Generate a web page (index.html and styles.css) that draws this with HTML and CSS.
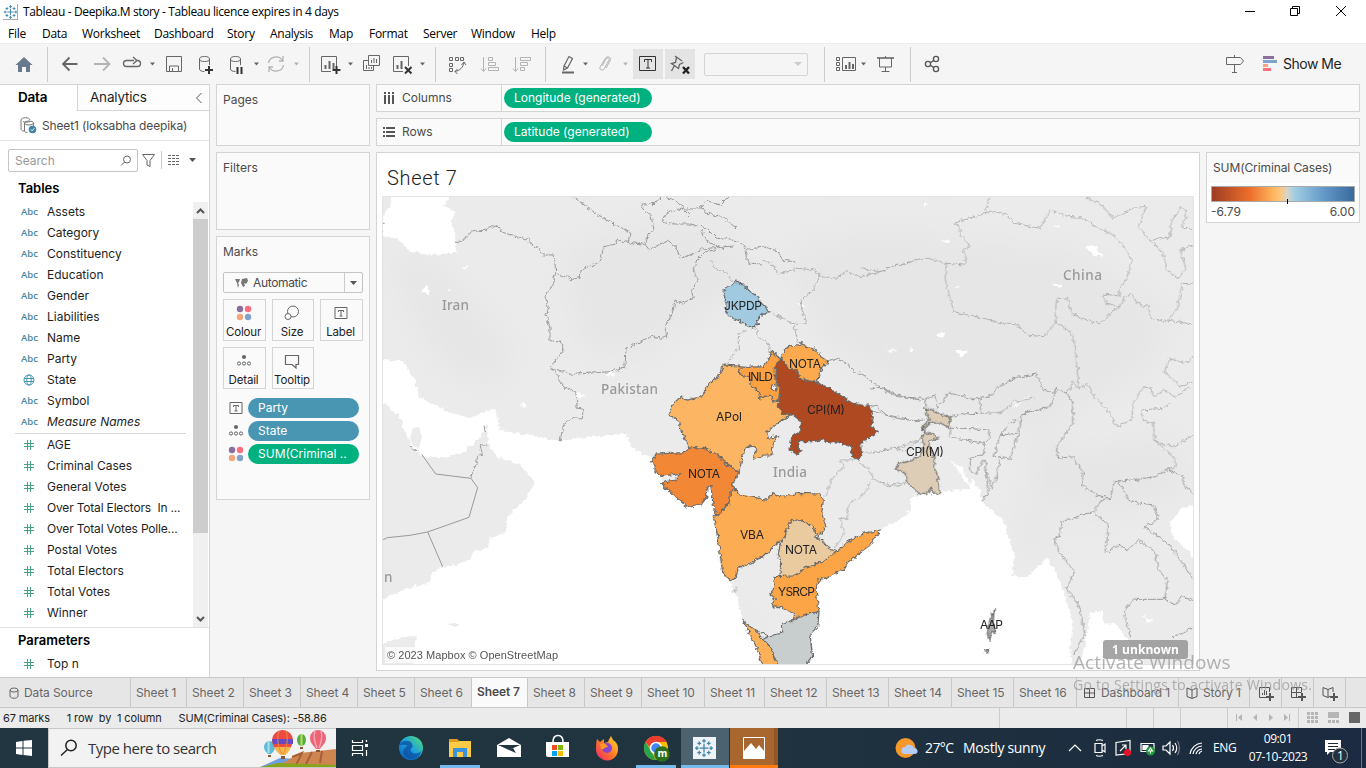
FILE: index.html
```html
<!DOCTYPE html>
<html lang="en">
<head>
<meta charset="utf-8">
<title>Tableau - Deepika.M story</title>
<link rel="stylesheet" href="styles.css">
</head>
<body>
<svg class="defs" width="0" height="0">
  <defs>
    <symbol id="tableau" viewBox="0 0 16 16"><path d="M8 4.500v7M4.500 8h7M8 .8v3M6.500 2.300h3M8 12.200v3M6.500 13.700h3M2.300 6.500v3M.8 8h3M13.700 6.500v3M12.200 8h3M4.200 2.800v3M2.700 4.300h3M11.800 2.800v3M10.300 4.300h3M4.200 10.200v3M2.700 11.700h3M11.800 10.200v3M10.300 11.700h3" stroke="#3d83ab" fill="none"/></symbol>
    <symbol id="hash" viewBox="0 0 12 12"><path d="M4.500 1v10M7.500 1v10M1 4.500h10M1 7.500h10" stroke="#44a480" fill="none"/></symbol>
    <symbol id="dots" viewBox="0 0 16 16"><circle cx="4" cy="4" r="3.200" fill="#8a6f9c"/><circle cx="12" cy="4" r="3.200" fill="#fb6e7f"/><circle cx="4" cy="12" r="3.200" fill="#f4a57c"/><circle cx="12" cy="12" r="3.200" fill="#80a3cd"/></symbol>
    <symbol id="detail" viewBox="0 0 16 16"><circle cx="8" cy="4" r="2.100" fill="#666"/><g fill="none" stroke="#666"><circle cx="3" cy="10.500" r="1.600"/><circle cx="8" cy="10.500" r="1.600"/><circle cx="13" cy="10.500" r="1.600"/></g></symbol>
    <symbol id="tbox" viewBox="0 0 16 16"><path d="M2 2.500h12v11H2zM5.500 7V5.500h5V7M8 5.500v5.500M6.500 11h3" fill="none" stroke="#666"/></symbol>
  </defs>
</svg>

<header class="titlebar">
  <svg class="app-icon" width="15" height="16"><use href="#tableau" width="15" height="16"/></svg>
  <span>Tableau - Deepika.M story - Tableau licence expires in 4 days</span>
  <svg class="winbtns" width="116" height="22" fill="none" stroke="#000"><path d="M0 10.500h10M45.500 7.500h7v7h-7zM47.500 7V5.500h7v7H53M91 5l10 10M101 5L91 15"/></svg>
</header>
<nav class="menu"><span>File</span><span>Data</span><span>Worksheet</span><span>Dashboard</span><span>Story</span><span>Analysis</span><span>Map</span><span>Format</span><span>Server</span><span>Window</span><span>Help</span></nav>

<div class="toolbar">
  <svg class="grp" width="47" height="41" viewBox="0 43 47 41"><path d="M24 57l8.500 8H30v7h-4v-5h-4v5h-4v-7h-2.500z" fill="#69788c"/></svg>
  <i class="sep"></i>
  <svg class="grp" width="261" height="41" viewBox="48 43 261 41" fill="none" stroke="#666">
    <path d="M77.500 64H63.500M69.500 57.500L63 64l6.500 6.500" stroke-width="1.800"/>
    <path d="M94 64h14.500M103 57.500l6.500 6.500-6.500 6.500" stroke="#b3b3b3" stroke-width="1.800"/>
    <path d="M134 60.500h-7.500a3 3 0 0 0 0 6h11a3 3 0 0 0 0-6h-2M133 57l4 3.500-4 3.500" stroke-width="1.300"/>
    <path d="M150 62.500h5l-2.500 3z" fill="#666" stroke="none"/>
    <path d="M166.500 56.500h15v15h-15zM169.500 71v-5h9v5M172.500 68v3.500"/>
    <g id="db"><ellipse cx="204.500" cy="59" rx="5" ry="2.500"/><path d="M199.500 59v10c0 1.500 2 2.500 5 2.500M209.500 59v6"/></g>
    <path d="M209 66v8M205 70h8" stroke="#333" stroke-width="2"/>
    <use href="#db" x="31"/><path d="M237.500 67v7M241.500 67v7" stroke="#333" stroke-width="2"/>
    <path d="M254 62.500h5l-2.500 3z" fill="#666" stroke="none"/>
    <path d="M268.500 63a7.500 7 0 0 1 14-2.500M283.500 65a7.500 7 0 0 1-14 2.500M283 56v5h-4M269 72v-5h4" stroke="#b3b3b3" stroke-width="1.300"/>
    <path d="M294 62.500h5l-2.500 3z" fill="#b3b3b3" stroke="none"/>
  </svg>
  <i class="sep"></i>
  <svg class="grp" width="125" height="41" viewBox="310 43 125 41" fill="none" stroke="#666">
    <path d="M331 71.500h-9.500v-15h15V67"/><path d="M325.500 69v-4M329.500 69v-8M333.500 69v-6" stroke-width="2"/><path d="M336.500 66v8M332.500 70h8" stroke="#333" stroke-width="2"/>
    <path d="M348 62.500h5l-2.500 3z" fill="#666" stroke="none"/>
    <path d="M368.500 55.500h11v10h-11zM368 60.500h-4.500v10h10V66M371.500 63v-3M374 63v-5M376.500 63v-4M366.500 69v-4M369 69v-2M371.500 69v-2"/>
    <path d="M403 71.500h-9.500v-15h15V66"/><path d="M397.500 69v-4M401.500 69v-8" stroke-width="2"/><path d="M405 67l6.500 6.500M411.500 67L405 73.500" stroke="#333" stroke-width="2"/>
    <path d="M420 62.500h5l-2.500 3z" fill="#666" stroke="none"/>
  </svg>
  <i class="sep"></i>
  <svg class="grp" width="109" height="41" viewBox="436 43 109 41" fill="none" stroke="#666">
    <path d="M449.500 57.500h3v3h-3zM455.500 57.500h3v3h-3zM460.500 57.500h3v3h-3zM449.500 63.500h3v3h-3zM449.500 68.500h3v3h-3zM455 71.500c5-1 8-4 9-9M461.500 65l2.500-3 2 3M457.500 69l-2.500 2.500 2.500 2.500"/>
    <path d="M483.500 57v14M481 68.500l2.500 3 2.500-3M488.500 57.500h4v3h-4zM488.500 62.500h7v3h-7zM488.500 67.500h10v3h-10zM515.500 57v14M513 68.500l2.500 3 2.500-3M520.500 57.500h10v3h-10zM520.500 62.500h7v3h-7zM520.500 67.500h4v3h-4z" stroke="#b3b3b3"/>
  </svg>
  <i class="sep"></i>
  <svg class="grp" width="158" height="41" viewBox="546 43 158 41" fill="none" stroke="#666">
    <path d="M564 66l5-9.500 3.500 2-5 9.500-4 2zM564 66l3.500 2" stroke-width="1.200"/><path d="M562 72.500h12" stroke-width="2"/>
    <path d="M583 62.500h5l-2.500 3z" fill="#666" stroke="none"/>
    <path d="M602 66l4-7c1-2 4-1 3 1l-5 9c-1 2-5 1-4-2l5-8c2-4 7-2 5 2l-4 7" stroke="#b3b3b3"/>
    <path d="M623 62.500h5l-2.500 3z" fill="#b3b3b3" stroke="none"/>
    <path d="M633 49h30v30h-30zM665 49h30v30h-30z" fill="#e4e4e4" stroke="none"/>
    <path d="M639.500 56.500h16v14h-16zM644.500 62v-2.500h7V62M648 59.500v8.500M646 68h4" stroke="#333"/>
    <path d="M675 56l7 5M676.500 57.500l-1 5-4 1 7 5 1-4 4-2M674.500 65.500l-3 5.500" stroke-width="1.300"/><path d="M683 67l6 6.500M689 67l-6 6.500" stroke="#222" stroke-width="2.400"/>
  </svg>
  <div class="combo"></div>
  <i class="sep combo-sep"></i>
  <svg class="grp" width="85" height="41" viewBox="825 43 85 41" fill="none" stroke="#666">
    <path d="M836.500 57.500h3v3h-3zM836.500 62.500h3v3h-3zM836.500 67.500h3v3h-3zM842.500 57.500h13v13h-13z"/><path d="M846 69v-4M849.500 69v-7M853 69v-5" stroke-width="2"/>
    <path d="M861 62.500h5l-2.500 3z" fill="#666" stroke="none"/>
    <path d="M877 58h17" stroke-width="1.600"/><path d="M879.500 58v9h12v-9M885.500 56v2M885.500 67v5M881.500 71.500h8"/>
  </svg>
  <i class="sep"></i>
  <svg class="grp" width="34" height="41" viewBox="911 43 34 41" fill="none" stroke="#555" stroke-width="1.300"><circle cx="928" cy="64" r="2.600"/><circle cx="936" cy="59" r="2.600"/><circle cx="936" cy="69" r="2.600"/><path d="M930.300 62.700l3.500-2.300M930.300 65.300l3.500 2.300"/></svg>
  <svg class="grp right" width="58" height="41" viewBox="1222 43 58 41" fill="none"><path d="M1226.500 57.500h14l3 3.500-3 3.500h-14zM1234.500 55v2M1234.500 65v7M1232 72.500h5" stroke="#666"/><path d="M1263 57.500h11" stroke="#8a6f9c" stroke-width="3"/><path d="M1263 61.500h14" stroke="#80a3cd" stroke-width="3"/><path d="M1263 65.500h5" stroke="#f4a57c" stroke-width="3"/><path d="M1263 69.500h8" stroke="#fb6e7f" stroke-width="3"/></svg>
  <span class="showme">Show Me</span>
</div>

<main class="work">
  <aside class="side">
    <div class="side-tabs"><b>Data</b><span>Analytics<svg width="8" height="12" fill="none" stroke="#555"><path d="M6.500 1L1.500 6l5 5"/></svg></span></div>
    <div class="source"><svg width="17" height="17" fill="none" stroke="#777"><path d="M1 3c0-3 9-3 9 0M1 3v9c0 1 1 2 3 2M3 4.500c2 1 5 1 7 0"/><ellipse cx="9" cy="6" rx="4.500" ry="2"/><path d="M4.500 6v8c0 1 1 1.500 3 1.500M13.500 6v3"/><circle cx="12.500" cy="12.500" r="3.800" fill="#3c85a5" stroke="none"/><path d="M10.800 12.500l1.300 1.300 2.200-2.500" stroke="#fff"/></svg><span>Sheet1 (loksabha deepika)</span></div>
    <div class="searchrow"><div class="search"><span>Search</span><svg width="12" height="12" fill="none" stroke="#666"><circle cx="7" cy="4.500" r="3.500"/><path d="M4.500 7L1 10.500"/></svg></div>
      <svg width="62" height="22" fill="none" stroke="#666"><path d="M4.500 5.500h12l-4.500 6v6l-3-1.500v-4.500z"/><path d="M23.500 2v18" stroke="#ccc"/><path d="M30 6.500h12M30 9.500h12M30 12.500h12M30 15.500h12" stroke-dasharray="3 1"/><path d="M51 9h7l-3.500 4z" fill="#555" stroke="none"/></svg></div>
    <h3>Tables</h3>
    <div class="tables">
      <div class="fields">
        <div class="f"><i>Abc</i>Assets</div><div class="f"><i>Abc</i>Category</div><div class="f"><i>Abc</i>Constituency</div><div class="f"><i>Abc</i>Education</div><div class="f"><i>Abc</i>Gender</div><div class="f"><i>Abc</i>Liabilities</div><div class="f"><i>Abc</i>Name</div><div class="f"><i>Abc</i>Party</div>
        <div class="f"><svg width="12" height="12" fill="none" stroke="#4795b0"><circle cx="6" cy="6" r="5"/><ellipse cx="6" cy="6" rx="2.200" ry="5"/><path d="M1 4.500h10M1 7.500h10"/></svg>State</div>
        <div class="f"><i>Abc</i>Symbol</div><div class="f"><i>Abc</i><em>Measure Names</em></div>
        <hr>
        <div class="f"><svg width="12" height="12"><use href="#hash"/></svg>AGE</div><div class="f"><svg width="12" height="12"><use href="#hash"/></svg>Criminal Cases</div><div class="f"><svg width="12" height="12"><use href="#hash"/></svg>General Votes</div><div class="f tight"><svg width="12" height="12"><use href="#hash"/></svg>Over Total Electors&nbsp; In ...</div><div class="f tight"><svg width="12" height="12"><use href="#hash"/></svg>Over Total Votes Polle...</div><div class="f"><svg width="12" height="12"><use href="#hash"/></svg>Postal Votes</div><div class="f"><svg width="12" height="12"><use href="#hash"/></svg>Total Electors</div><div class="f"><svg width="12" height="12"><use href="#hash"/></svg>Total Votes</div><div class="f"><svg width="12" height="12"><use href="#hash"/></svg>Winner</div>
      </div>
      <div class="scroll"><svg width="15" height="17" fill="none" stroke="#555" stroke-width="2"><path d="M4 11l3.500-3.500L11 11"/></svg><div class="thumb"></div><svg width="15" height="17" fill="none" stroke="#555" stroke-width="2"><path d="M4 7l3.500 3.500L11 7"/></svg></div>
    </div>
    <div class="params"><h3>Parameters</h3><div class="f"><svg width="12" height="12"><use href="#hash"/></svg>Top n</div></div>
  </aside>

  <section class="cards">
    <div class="card pages">Pages</div>
    <div class="card filters">Filters</div>
    <div class="card marks"><span>Marks</span>
      <div class="marktype"><svg width="13" height="10" fill="#777"><path d="M0 1h5l-1 3-1 1 1 2-1 3-1-5-1-2zM7 1l5-1 1 3-2 3-2-1 1 3-2 1-2-4z"/></svg><span>Automatic</span><svg class="dd" width="18" height="19"><path d="M.5 0v19" stroke="#ccc"/><path d="M6 8h7l-3.500 4z" fill="#555"/></svg></div>
      <div class="btns">
        <div><svg width="16" height="16"><use href="#dots"/></svg>Colour</div>
        <div><svg width="16" height="16" fill="none" stroke="#666"><circle cx="9" cy="6.500" r="5.500"/><circle cx="4" cy="11.500" r="3" fill="#fafafa"/></svg>Size</div>
        <div><svg width="16" height="16"><use href="#tbox"/></svg>Label</div>
        <div><svg width="16" height="16"><use href="#detail"/></svg>Detail</div>
        <div><svg width="16" height="16" fill="none" stroke="#666" stroke-width="1.200"><path d="M1.500 2.500h13v9H12v3.500l-4-3.500H1.500z"/></svg>Tooltip</div>
      </div>
      <div class="pillrow"><svg width="16" height="16"><use href="#tbox"/></svg><span class="pill blue">Party</span></div>
      <div class="pillrow"><svg width="16" height="16"><use href="#detail"/></svg><span class="pill blue">State</span></div>
      <div class="pillrow"><svg width="16" height="16"><use href="#dots"/></svg><span class="pill">SUM(Criminal ..</span></div>
    </div>
  </section>

  <section class="canvas">
    <div class="shelf"><span class="shelf-name"><svg width="12" height="12" fill="none" stroke="#555" stroke-width="2"><path d="M2 0v2M6 0v2M10 0v2M2 3v9M6 3v9M10 3v9"/></svg>Columns</span><span class="pill">Longitude (generated)</span></div>
    <div class="shelf"><span class="shelf-name"><svg width="12" height="12" fill="none" stroke="#555" stroke-width="2"><path d="M0 2h2M0 6h2M0 10h2M3 2h9M3 6h9M3 10h9"/></svg>Rows</span><span class="pill">Latitude (generated)</span></div>
    <div class="viewrow">
      <div class="view">
        <h1>Sheet 7</h1>
        <svg class="map" width="812" height="469" viewBox="382 196 812 469">
          <defs>
            <filter id="rough" filterUnits="userSpaceOnUse" x="372" y="186" width="832" height="488"><feTurbulence type="fractalNoise" baseFrequency=".24" numOctaves="2" seed="7"/><feDisplacementMap in="SourceGraphic" scale="5.500" xChannelSelector="R" yChannelSelector="G"/></filter>
            <filter id="soft" x="-50%" y="-50%" width="200%" height="200%"><feGaussianBlur stdDeviation="16"/></filter>
          </defs>
          <path d="M382 196h812v469H382z" fill="#ebebeb"/>
          <g fill="#e6e6e6" filter="url(#soft)"><path d="M385 250l50 10 80 90-20 40-60-30z"/><path d="M560 250l60-20 90-10 60 60-80 40-50 40-60-10z"/><path d="M780 250l90-20 200 20 100 60-20 60-110 60-140-40-80-50z"/><path d="M1030 430l50 20 90-20 20 60-90 30-70-20z"/><path d="M1010 500l30 10 10 50-20 10z"/><path d="M732 590l20 30 10 30-15-5z"/></g>
          <g fill="#fff" filter="url(#rough)">
            <path d="M393 190L390 206 383 216V235L400 241 408 250 423 254 440 255 456 252 455 230 450 222 456 213 445 205 453 190Z"/>
            <path d="M375 360L402 361 413 377 420 397 447 412 470 418 495 408 500 430 527 435 560 441 587 437 627 434 630 445 643 455 652 457 656 462 662 483 687 507 707 497 710 485 714 513 720 563 728 580 737 597 743 620 755 643 763 672H803L812 657 810 633 819 612 817 583 830 577 847 563 880 530 903 518 911 508 910 498 927 493 940 492 969 489 972 478 980 490 983 503 1003 520 1010 543 1015 557 1012 575 1027 578 1047 558 1053 567 1063 590 1073 623 1070 647 1073 672H413L415 643 417 635 400 638 375 646V602L390 595 410 588 430 582 432 573 443 567 472 560 473 552 488 548 490 538 507 532 507 517 525 500 535 483 520 465 497 457 488 443 487 423 480 438 463 453 447 457 423 457 412 447 405 433 400 417 375 396Z"/>
            <path d="M1090 612H1103V623L1115 624 1128 640 1134 650 1150 672H1078L1086 640ZM1200 503L1182 508 1170 523 1173 537 1187 550 1200 568Z"/>
            <path d="M660 470l22 3-20 5zM422 291l4-5 5 4-3 5zM461 268l6-2 2 2zM520 405l5-3v6zM1085 247l8-2 10 10-8 0zM1050 283l12 2-2 3zM939 240l12 1-3 2zM935 335l10-4-2 7zM888 349l8 1-5 3zM956 351l12 0-7 6zM925 334l6 6M575 392l10 3-4 4zM1142 615l10 5-2 4zM923 203l7 1-6 2zM795 302l12 4-5 1zM853 340l8 1zM890 344l-4 8zM908 354l4-8 1 4zM1054 225l6 0-2 3zM955 285l6 2-4 1zM448 289l4 1-2 2zM605 373l12 0-8 4z"/>
            <path d="M950 460l12 8 12 22-8-8zM1010 410l10-10 12-4-14 8z"/>
          </g>
          <path d="M413 428l6-1 3 10-3 11-6-2-3-8zM447 624l8-1 5 2-5 2zM487 464l5-4z" fill="#ebebeb"/>
          <g class="borders" filter="url(#rough)">
            <g transform="translate(380 190) scale(.33333)">
              <path d="M222 157L245 157 260 140 275 125 322 120 325 110 360 113 368 127 410 140 445 148 455 165 475 175 490 195 523 195 527 248 545 258 565 262 572 270 600 262 605 237 640 225 663 210 670 170 705 163 710 150 745 157 795 163 808 180 840 162"/>
              <path d="M745 157L750 125 705 105 650 72 578 20M797 163L803 140 822 118 812 75 785 60 785 42 828 40 840 25"/>
              <path d="M527 248L518 285 495 320 508 352 498 375 510 412 510 452 548 458 548 485 510 532 575 553 650 548 690 545 735 530 738 480 760 463"/>
              <path d="M510 532L530 552 550 590 587 605 592 655 610 657 607 683 575 685 550 705 541 750"/>
              <path d="M273 865L278 840 290 820 292 800 307 795 300 765 323 765M312 710L317 730M92 768L100 780 115 782"/>
            </g>
            <path d="M660 244l8-3 8 5 4 12 10-3 12-6 20-2 12-1M654 205l8-8M660 197l12 2 14 10 12 0 10-8 12 4 8-8M690 216l-8-8-14 4-6 9 12 3 16 0 16 4 10 10 22 3 10 8 16-2 14 4 4 9 14 2M697 260l8-8 18-4M702 231l4 10 18 8M744 247l4 16 14 1M700 205l6 8 18 5 12 10"/>
            <g transform="translate(630 260) scale(.33333)">
              <path d="M200 0L190 35 205 60 185 90 190 115 155 130 135 120 130 150 105 200 110 230 95 235 70 228 30 245 0 262"/>
              <path d="M590 305L615 295 650 310 665 330 700 345 730 370 800 405 870 420M710 435L740 440 770 465 840 478"/>
              <g class="thin"><path d="M400 0L430 15 445 42 500 25 555 30 567 45 620 55 650 35 690 50 740 40 800 15 840 5M245 0L250 20 290 40 305 65M567 45L550 90 510 125 520 160 530 190 485 190 430 160M490 190L505 250M350 210L325 225 325 265 300 300 290 315M375 200L385 230 415 250 420 275"/></g>
            </g>
            <g class="thin" transform="translate(640 430) scale(.33333)"><path d="M665 60L690 70 760 55 800 45 850 20M650 90L600 90 610 110 575 150 555 200M660 95L690 125 700 150 770 170 800 160M690 155L680 185 625 225 620 265 600 265 612 310 585 355M290 470L288 485 276 484"/></g>
            <g transform="translate(880 190) scale(.33333)">
              <g class="thin">
                <path d="M-60 235L0 245 60 222 145 205 200 220 250 225 262 215 250 180 270 170 240 135 240 108 222 100 335 63 380 75 405 100 480 115 510 60 560 78 610 85 640 105 700 135 740 180 755 215 740 265 715 300 720 318 668 312 680 340 720 350 690 370 660 402 620 390 580 375 560 325 530 325 525 370 528 398"/>
                <path d="M200 220L195 265 210 320 220 365 310 385 370 400 405 400 440 435 490 440 528 398 570 425 585 465 597 600M330 22L315 65"/>
                <path d="M610 20L665 45 700 85 760 55 800 48 775 110 810 152 870 140 875 90 905 52 920 70 905 110 940 120M810 152L850 190 860 240 895 265 918 235 900 180 940 165M720 350L735 320 755 312 770 340 805 350 815 385 860 395 895 350 905 280 940 282M860 390L940 403"/>
                <path d="M940 500L915 520 870 505 853 545 880 570 900 590 940 575M560 610L580 575 597 600 620 580 640 615 680 660 712 710 755 690 760 640 790 590 815 595 820 620 850 600 885 620 930 590M870 635L850 655 785 660 790 690 820 700 825 755 880 770 940 735M825 755L885 805 885 830 850 840M0 785L40 770 75 785 125 740M0 875L20 890 80 875M302 670L365 668 400 635 460 625"/>
              </g>
              <path d="M-30 598L0 592 50 620 135 625 165 615 172 655 205 608 285 628 330 620 355 590 410 562 470 552 490 600 520 610 530 595 560 610 578 640 578 700 530 770 535 805 580 800 610 850 605 885 650 915 690 925 705 875 755 870 825 860 860 838 905 855 912 885 940 912"/>
              <path d="M530 598L510 650 430 670 415 730 390 808 343 798 360 735 410 730M455 660L390 700 360 735M210 680L250 672 302 670 300 628M208 715L260 715 325 720 330 745 312 760 210 742ZM312 760L315 790 270 805 272 845 290 850 305 815 315 810 325 915 310 920 308 935M360 808L350 860 335 895 322 850M-90 640L0 670 50 685 105 692 135 690M135 625L137 655"/>
              <path d="M690 925L665 930 640 965 545 995 540 1040 522 1045 540 1090 583 1145 560 1195 597 1245 615 1335 580 1395M640 965L685 1005 677 1090 715 1065 745 1078 775 1050 825 1085 835 1140 862 1170 855 1228 760 1228 732 1265 752 1342M715 875L750 935 820 945 835 985 795 1012 870 1065 940 1170M855 1228L885 1245 905 1220 940 1232M875 1340L905 1330 940 1312"/>
            </g>
          </g>
          <g class="borders" transform="translate(380 190) scale(.33333)"><path d="M125 793L167 852 273 865 293 893 267 982 143 1026 90 1036 22 1043 8 1050M143 1026L188 1130M8 100h6"/></g>
          <g class="place"><text x="442" y="310" textLength="27">Iran</text><text x="601" y="394" textLength="57">Pakistan</text><text x="773" y="477" textLength="34">India</text><text x="1063" y="280" textLength="39">China</text><text x="384" y="582">n</text></g>
          <g class="states" filter="url(#rough)">
            <g transform="translate(630 260) scale(.33333)">
              <path fill="#a1c9df" d="M318 63L327 70 340 72 355 90 375 105 395 130 420 155 400 162 382 178 385 192 368 204 350 195 330 183 300 172 287 155 289 120 278 97 295 78 308 75Z"/>
              <path fill="#fcb562" d="M280 315L325 318 330 345 355 350 370 385 390 400 395 412 420 405 430 425 447 420 455 460 480 465 410 515 415 535 445 530 430 550 425 585 400 585 375 600 370 590 380 570 360 555 345 565 335 600 327 638 310 625 270 595 220 565 180 565 155 515 145 485 117 465 130 430 155 408 170 420 215 410 235 375 265 350Z"/>
              <path fill="#fca143" d="M425 272L440 290 455 297 436 320 435 360 450 385 447 415 430 425 420 405 390 415 385 395 365 380 360 350 330 345 325 320 350 322 400 320 415 300Z"/>
              <path fill="#fcaa4e" d="M465 265L485 257 508 258 515 247 530 262 560 270 572 290 595 305 575 325 560 368 540 370 510 355 500 330 475 325 455 295Z"/>
              <path fill="#ae4a24" d="M455 295L440 310 435 350 450 385 445 440 455 460 485 462 515 485 510 515 485 530 480 570 500 583 511 575 500 545 550 545 575 540 600 550 620 545 665 560 668 590 680 600 695 590 692 555 700 545 745 515 725 500 730 470 715 435 690 435 660 425 600 385 560 368 510 355 500 330 475 325Z"/>
              <path fill="#ebebeb" d="M427 376L438 372 438 390 427 388Z"/>
            </g>
            <g transform="translate(640 430) scale(.33333)">
              <path fill="#f28734" d="M32 92L50 72 130 68 155 52 190 55 235 75 262 105 298 128 275 165 290 178 270 190 272 210 250 235 245 250 230 255 220 230 212 165 200 175 200 200 180 225 145 232 110 205 65 160 75 155 105 150 125 130 70 138 45 125 45 105Z"/>
              <path fill="#fcac52" d="M275 180L290 178 300 195 360 205 370 215 400 188 420 200 480 190 540 192 550 210 545 250 558 290 535 320 520 290 490 275 455 268 440 300 430 325 405 345 370 380 345 390 340 400 295 412 290 435 275 452 258 440 247 420 235 330 220 260 245 250 268 215Z"/>
              <path fill="#eacba0" d="M455 268L490 275 520 290 525 320 550 335 565 355 590 365 575 385 545 395 500 412 460 438 418 440 425 400 415 375 420 345 430 325 440 300Z"/>
              <path fill="#fca547" d="M403 440L460 438 500 412 545 395 590 365 625 335 670 310 720 300 690 345 650 375 620 400 615 415 570 440 535 450 528 480 537 545 500 553 465 565 460 575 460 550 430 535 400 530 395 515 410 510 390 495 400 480Z"/>
              <path fill="#c7cecd" d="M537 545L533 590 510 612 518 680 490 715 410 715 395 655 370 628 385 618 425 610 425 580 460 570 500 553Z"/>
              <path fill="#fcb059" d="M308 572L345 600 372 632 395 655 400 680 410 690 410 715 372 715 345 640Z"/><path d="M385 618L345 600" fill="none"/>
            </g>
            <g transform="translate(880 190) scale(.33333)">
              <path fill="#ddcdb6" d="M135 655L160 660 175 672 213 682 205 712 180 698 150 700 130 715 137 730 155 728 175 745 145 755 150 775 162 800 163 830 175 870 180 910 160 912 155 895 140 910 115 910 85 880 75 850 45 835 60 820 100 810 125 790 130 765 125 740 135 725 125 712 148 690Z"/>
              <path fill="#aaa" d="M343 1255L340 1290 345 1330 335 1325 328 1355 322 1330 330 1290ZM316 1378L324 1378 324 1388 317 1389Z"/>
            </g>
          </g>
          <g class="lab"><text x="724" y="310" textLength="38">JKPDP</text><text x="748" y="381" textLength="25">INLD</text><text x="789" y="368" textLength="32">NOTA</text><text x="716" y="421" textLength="26">APol</text><text x="807" y="414" textLength="38">CPI(M)</text><text x="688" y="478" textLength="32">NOTA</text><text x="740" y="539" textLength="24">VBA</text><text x="785" y="554" textLength="32">NOTA</text><text x="778" y="596" textLength="37">YSRCP</text><text x="906" y="456" textLength="38">CPI(M)</text><text x="980" y="629" textLength="23">AAP</text></g>
          <path d="M385 647h176v16H385z" fill="#fff" opacity=".75"/><text class="credit" x="387" y="659" textLength="171">© 2023 Mapbox © OpenStreetMap</text>
          <rect x="1103" y="640" width="85" height="19" rx="3" fill="#909090" opacity=".8"/><text class="unknown" x="1112" y="654" textLength="67">1 unknown</text>
          <path d="M382.500 196.500h811v468h-811z" fill="none" stroke="#e3e3e3"/>
        </svg>
      </div>
      <div class="legend"><div class="lt">SUM(Criminal Cases)</div><div class="lb"><div class="ramp"><i></i></div><div class="lv"><span>-6.79</span><span>6.00</span></div></div></div>
    </div>
  </section>
</main>

<div class="tabs">
  <span class="ds"><svg width="10" height="12" fill="none" stroke="#666"><ellipse cx="5" cy="3" rx="4" ry="2"/><path d="M1 3v6c0 3 8 3 8 0V3"/></svg>Data Source</span><span>Sheet 1</span><span>Sheet 2</span><span>Sheet 3</span><span>Sheet 4</span><span>Sheet 5</span><span>Sheet 6</span><span class="on">Sheet 7</span><span>Sheet 8</span><span>Sheet 9</span><span>Sheet 10</span><span>Sheet 11</span><span>Sheet 12</span><span>Sheet 13</span><span>Sheet 14</span><span>Sheet 15</span><span>Sheet 16</span>
  <span class="db"><svg width="12" height="12" fill="none" stroke="#555"><path d="M.5 1.500h10v9H.5zM.5 6h10M5.500 1.500v9"/></svg>Dashboard 1</span>
  <span class="st"><svg width="13" height="12" fill="none" stroke="#555"><path d="M6 3L1 1v8.500L6 11.500l5-2V1zM6 3v8"/></svg>Story 1</span>
  <span class="new"><svg width="17" height="16" fill="none" stroke="#555"><path d="M9 12.500H1.500v-10h10V7M4.500 10V8M6.500 10V5M8.500 10V6"/><path d="M12 8v8M8 12h8" stroke-width="2"/></svg></span>
  <span class="new"><svg width="17" height="16" fill="none" stroke="#555"><path d="M9 12.500H1.500v-10h10V7M1.500 7.500h10M6.500 2.500v10"/><path d="M12 8v8M8 12h8" stroke-width="2"/></svg></span>
  <span class="new"><svg width="17" height="16" fill="none" stroke="#555"><path d="M8 11l-2 1.500-5-2v-8l5 2 5-2V7M6 4.500v8"/><path d="M12 8v8M8 12h8" stroke-width="2"/></svg></span><span></span>
</div>
<div class="status"><span>67 marks</span><span>1 row&nbsp; by&nbsp; 1 column</span><span>SUM(Criminal Cases): -58.86</span>
  <svg width="367" height="20" viewBox="999 708 367 20"><path d="M999.500 708v20M1126.500 708v20M1153.500 708v20M1180.500 708v20M1227.500 708v20M1298.500 708v20" stroke="#ccc"/><path d="M1236 714h1v7h-1zM1242 714v7l-4-3.500zM1257 714v7l-4-3.500zM1269 714v7l4-3.500zM1284 714v7l4-3.500zM1289 714h1v7h-1z" fill="#b5b5b5"/><path d="M1307 713.500h11M1307 717.500h11M1307 721.500h11" stroke="#b5b5b5" stroke-width="3" stroke-dasharray="3 1"/><path d="M1328 712h11v6h-11z" fill="#b5b5b5"/><path d="M1328 721.500h11" stroke="#b5b5b5" stroke-width="3" stroke-dasharray="3 1"/><path d="M1349 712h11v11h-11z" fill="#666"/></svg>
</div>

<footer class="taskbar">
  <svg width="48" height="40" viewBox="0 728 48 40" fill="#fff"><path d="M16 742l6.500-1v6.500H16zM23.500 740.800L32 740v7.500h-8.500zM16 748.500h6.500v6.500l-6.500-1zM23.500 748.500H32v7.500l-8.500-1z"/></svg>
  <div class="tsearch"><svg width="18" height="18" fill="none" stroke="#222" stroke-width="1.500"><circle cx="11" cy="6.500" r="5.200"/><path d="M7.500 10.500L1 16.500"/></svg><span>Type here to search</span>
    <svg class="art" width="80" height="38" viewBox="256 729 80 38"><path d="M260 767l20-9 56 3v7z" fill="#6f9fe0"/><path d="M276 767l24-14 36-4v18z" fill="#cf8550"/><path d="M292 757l10-4-6 12M312 752l-6 12M322 751l-2 12" stroke="#a55f3a" stroke-width="2" fill="none"/><path d="M256 768l22-5 58 2v3z" fill="#87a51b"/>
      <path d="M264 747a5.500 6 0 0 1 11 0c0 3-2 5-4 7h-3c-2-2-4-4-4-7z" fill="#5cb9d8"/><path d="M268.500 741v12" stroke="#a8e0ec" stroke-width="2"/><path d="M268 755h3v2h-3z" fill="#875936"/>
      <path d="M272 740a10.500 10 0 0 1 21 0c0 6-5 11-8 15h-4c-4-4-9-9-9-15z" fill="#eb4b43"/><path d="M272 739h21v5h-20z" fill="#644bc4"/><path d="M274 747h17c-2 4-3 6-6 8h-4c-3-2-5-4-7-8z" fill="#f4b64a"/><path d="M279 731c-3 9 0 18 3 23M286 731c3 9 0 18-3 23" stroke="#f28b38" fill="none"/><path d="M281 756h4v3h-4z" fill="#875936"/>
      <ellipse cx="301.500" cy="740" rx="4.500" ry="6" fill="#57ad45"/><path d="M301.500 734v12" stroke="#bbdc63" stroke-width="2"/><path d="M300 747h3v2h-3z" fill="#875936"/>
      <path d="M310 738a8 8 0 0 1 16 0c0 5-4 8-6 11h-4c-2-3-6-6-6-11z" fill="#ec6476"/><path d="M315 731c-2 6 0 12 2 17M321 731c2 6 0 12-2 17" stroke="#f7a5b6" stroke-width="1.500" fill="none"/><path d="M316 750h4v2h-4z" fill="#875936"/></svg>
  </div>
  <svg width="444" height="40" viewBox="336 728 444 40">
    <defs><linearGradient id="edge" x1="0" y1="1" x2="1" y2="0"><stop offset="0" stop-color="#0b57b8"/><stop offset=".5" stop-color="#1ba2df"/><stop offset="1" stop-color="#5be06b"/></linearGradient><linearGradient id="fox" x1="1" y1="0" x2="0" y2="1"><stop offset="0" stop-color="#ffe135"/><stop offset=".5" stop-color="#ff7b25"/><stop offset="1" stop-color="#ef1e72"/></linearGradient></defs>
    <path d="M352.500 740v2.500h10V740M352.500 756v-2.500h10v2.500M352.500 745.500h10v5h-10zM366.500 740v2M366.500 750v6" stroke="#fff" fill="none" stroke-width="1.200"/><path d="M365 744h3v3h-3z" fill="#fff"/>
    <circle cx="411" cy="748" r="12" fill="url(#edge)"/><path d="M399.500 745c3-6 12-5 13 0 1 3-4 4-1 7 3 3 8 1 10-1-3 10-12 10-16 6-5-5-1-10 2-11-3-2-6-1-8-1z" fill="#0c4ea2" opacity=".75"/>
    <path d="M449 739h8l2 2h12v16h-22z" fill="#ffca45"/><path d="M449 739h8l2 3h-10z" fill="#df9d1c"/><path d="M453 748h14v9h-4v-5h-6v5h-4z" fill="#3a94dc"/>
    <path d="M497 745l12-7 12 7v12h-24z" fill="#fff"/><path d="M498 745h22l-11 5zM509 750l7 3-3-5" fill="#213640"/>
    <path d="M546 742h23v15h-21q-2 0-2-2z" fill="#fff"/><path d="M553 742c0-6 3-6.500 5-6.500s5 .5 5 6.500" stroke="#fff" stroke-width="1.500" fill="none"/><path d="M552 745h5v5h-5z" fill="#f25022"/><path d="M558 745h5v5h-5z" fill="#7fba00"/><path d="M552 751h5v5h-5z" fill="#00a4ef"/><path d="M558 751h5v5h-5z" fill="#ffb900"/>
    <path d="M597 739l3 3 4-3v4l4-1c1-3 2-4 3-6l2 4c4 3 5 5 5 9a11 11 0 0 1-22 1c0-4 0-8 1-11z" fill="url(#fox)"/><circle cx="607" cy="748" r="5" fill="#8945ce"/><path d="M600 744c4-1 7 0 8 3-3 0-4 3-7 2z" fill="#ff9b25"/>
    <circle cx="656" cy="748" r="12" fill="#fbbd04"/><path d="M645.500 742a12 12 0 0 1 21 0H656l-4 8z" fill="#ea3e32"/><path d="M645.500 742l5.500 9 5 9a12 12 0 0 1-10.500-18z" fill="#2ba34e"/><circle cx="656" cy="748" r="5.500" fill="#4285f4" stroke="#fff" stroke-width="1.500"/><circle cx="662" cy="754" r="7.800" fill="#2c701f"/><text x="657.500" y="757" class="badge-m">m</text>
    <path d="M681 728h48v40h-48z" fill="#4c626e"/><path d="M693 737h23v22h-23z" fill="#eef2f5"/><use href="#tableau" x="694" y="738" width="20" height="20"/>
    <path d="M730 728h44v40h-44z" fill="#a8672f"/><path d="M774 728h4v40h-4z" fill="#935624"/><path d="M743.500 737.500h21v21h-21z" stroke="#fff" fill="none"/><path d="M744 751l7-8 5 6 3-4 5 6v8h-20z" fill="#fff"/>
    <path d="M440 765h40v3h-40zM636 765h40v3h-40zM681 765h48v3h-48z" fill="#76b9ed"/><path d="M730 765h48v3h-48z" fill="#ff7b12"/>
  </svg>
  <svg class="wx" width="24" height="40" viewBox="894 728 24 40"><circle cx="905.500" cy="748" r="10" fill="#f4982a"/><path d="M905 754a3.500 3.500 0 0 1 0-7 5 5 0 0 1 9 1 3 3 0 0 1 1 6z" fill="#b5cdf7"/></svg>
  <span class="temp">27°C</span><span class="sunny">Mostly sunny</span>
  <svg class="tray" width="140" height="40" viewBox="1066 728 140 40" fill="none" stroke="#fff" stroke-width="1.200"><path d="M1069 751l6-6 6 6M1095 743.500h7v9h-7zM1102 746l3-2v8l-3-2M1096 740.500q3-1.500 7 0M1096 755.500q3 1.500 7 0M1116 742.500l14-2v13l-14 1.500zM1120 751l6-6M1122 745h4v4"/><circle cx="1127.500" cy="752.500" r="3.500" fill="#e81123" stroke="none"/><path d="M1141 743.500h13v8h-13z"/><path d="M1143 745.500h5v4h-5z" fill="#fff"/><circle cx="1150.500" cy="751" r="4.500" fill="#1a9b35" stroke="none"/><path d="M1150.500 748l2 3h-4zM1150.500 751v2.500M1163 746h3l4-4v12l-4-4h-3zM1172.500 745q2 3 0 6M1175 743q3.500 5 0 10"/><path d="M1177.500 741q4 7 0 14" stroke="#778"/><path d="M1190 754a13 13 0 0 1 12-11M1193 754a10 10 0 0 1 9-8M1196 754a7 7 0 0 1 6-5M1199 754a4 4 0 0 1 3-3"/></svg>
  <span class="eng">ENG</span><span class="clock"><b>09:01</b><b>07-10-2023</b></span>
  <svg class="note" width="46" height="40" viewBox="1320 728 46 40"><path d="M1325 740h16v12h-11l-3 3v-3h-2z" fill="#fff"/><path d="M1328 743.500h10M1328 746.500h10M1328 749.500h7" stroke="#1c2c3c"/><circle cx="1340" cy="755.500" r="7.500" fill="#26323b" stroke="#aaa"/><text x="1337" y="760" class="cnt">1</text><path d="M1361.500 728v40" stroke="#68747f"/></svg>
</footer>

<div class="watermark"><div>Activate Windows</div><p>Go to Settings to activate Windows.</p></div>
</body>
</html>
```
FILE: styles.css
```css
*{box-sizing:border-box}
body{margin:0;width:1366px;height:768px;overflow:hidden;display:flex;flex-direction:column;background:#f5f5f5;color:#1e1e1e;font:12px/16px Inter,"Liberation Sans",sans-serif;position:relative}
svg{display:block;flex:none}
.defs{position:absolute}
h1,h3,p{margin:0}
.titlebar{height:24px;background:#fff;display:flex;align-items:center;padding-left:3px;gap:5px;color:#000;font:12px/24px "Open Sans","Noto Sans",sans-serif;letter-spacing:-.36px}
.app-icon{border-right:1px solid #aaa;border-bottom:1px solid #aaa}
.winbtns{margin-left:auto;margin-right:5px}
.menu{height:19px;background:#fff;padding-left:8px;display:grid;grid-template-columns:34px 40px 72px 73px 43px 59px 40px 54px 48px 60px auto;font:12px/19px "Open Sans","Noto Sans",sans-serif;color:#000;letter-spacing:-.27px}
.toolbar{height:41px;flex:none;border-top:1px solid #ececec;display:flex;align-items:center;background:#f5f5f5}
.grp{margin-top:-1px}
.sep{width:1px;height:35px;background:#ccc;flex:none}
.combo{width:104px;height:23px;border:1px solid #d4d4d4;border-radius:2px;display:flex;align-items:center;justify-content:flex-end;padding-right:5px}
.combo::after{content:"";border:4px solid transparent;border-top:4px solid #ccc;border-bottom:0}
.combo-sep{margin-left:16px}
.right{margin-left:auto}
.showme{font-size:14px;width:83px;margin-left:3px;letter-spacing:-.5px}
.work{height:593px;display:flex;flex:none}
.side{width:210px;background:#fff;border-right:1px solid #d4d4d4;border-top:1px solid #d4d4d4}
.side-tabs{display:flex;height:26px;font-size:13.500px;line-height:25px;letter-spacing:-.2px}
.side-tabs b{width:77px;padding-left:18px;font-weight:600;color:#000}
.side-tabs span{flex:1;border-left:1px solid #d4d4d4;border-bottom:1px solid #d4d4d4;padding:0 6px 0 12px;background:#fdfdfd;display:flex;align-items:center;justify-content:space-between}
.source{height:30px;border-bottom:1px solid #e2e2e2;display:flex;align-items:center;padding-left:20px;gap:5px;color:#4a4a4a;letter-spacing:-.15px}
.searchrow{display:flex;padding:8px 0 0 8px}
.search{width:130px;height:23px;border:1px solid #c4c4c4;border-radius:2px;color:#999;display:flex;align-items:center;justify-content:space-between;padding:0 5px 0 6px}
.side h3{font-size:13px;font-weight:600;padding-left:18px;color:#000}
.searchrow + h3{margin-top:7px;height:23px;line-height:18px}
.tables{display:flex;height:426px;border-bottom:1px solid #e0e0e0}
.fields{width:193px;height:425px;margin-top:-1px;overflow:hidden}
.f{height:21px;line-height:20px;display:flex;align-items:center;padding-left:21px;white-space:nowrap}
.tight{letter-spacing:-.18px}
.f i{width:26px;font:600 9.500px/20px "Open Sans",sans-serif;color:#4a86a0;letter-spacing:0}
.f svg{margin:0 12px 0 2px}
.fields hr{border:0;border-top:1px solid #d8d8d8;margin:1px 7px 0 15px}
.scroll{width:15px;background:#f0f0f0;display:flex;flex-direction:column}
.thumb{background:#cdcdcd;height:314px;margin-bottom:auto}
.params h3{height:24px;line-height:24px}
.params .f{height:23px}
.cards{width:160px;padding-left:6px;display:flex;flex-direction:column;gap:6px}
.card{border:1px solid #d4d4d4;background:#fafafa;padding:7px 6px;color:#4a4a4a}
.pages{height:62px}.filters{height:78px}.marks{height:264px}
.marktype{margin-top:12px;height:21px;width:140px;border:1px solid #c4c4c4;border-radius:2px;display:flex;align-items:center;padding-left:11px;gap:5px;letter-spacing:-.35px}
.dd{margin-left:auto}
.btns{display:grid;grid-template-columns:43px 42px 43px;column-gap:6px;row-gap:6px;margin:6px 0 9px}
.btns div{height:42px;border:1px solid #d4d4d4;display:flex;flex-direction:column;align-items:center;padding:5px 2px 0 0;gap:3px;color:#222;font-size:11.500px;letter-spacing:-.15px}
.pillrow{display:flex;align-items:center;gap:4px;height:20px;margin-bottom:3px;padding-left:5px}
.pillrow .pill{width:111px}
.pill{background:#00b180;color:#fff;border-radius:10px;height:20px;line-height:20px;padding-left:10px;white-space:nowrap}
.blue{background:#4996b2}
.canvas{width:984px;margin-left:6px;display:flex;flex-direction:column;gap:6px}
.shelf{height:28px;border:1px solid #d4d4d4;background:#fafafa;display:flex;align-items:center}
.shelf-name{width:125px;height:26px;border-right:1px solid #d4d4d4;padding-left:6px;display:flex;align-items:center;gap:7px;color:#4a4a4a}
.shelf .pill{width:148px;margin-left:2px}
.viewrow{display:flex;gap:6px;align-items:flex-start}
.view{width:824px;height:519px;background:#fff;border:1px solid #d4d4d4;padding-left:5px}
.view h1{font:300 20px/24px Roboto,Inter,sans-serif;letter-spacing:.65px;height:43px;padding:13px 0 0 5px;color:#222}
.map{display:block}
.borders path{fill:none;stroke:#999;stroke-width:1;vector-effect:non-scaling-stroke}
.borders .thin path{stroke:#a5a5a5;stroke-width:.8}
.states path{stroke:#6a6a6a;stroke-width:1.200;vector-effect:non-scaling-stroke}
.place{font:500 13.500px "Noto Sans","Open Sans",sans-serif;fill:#999}
.lab{font:12px Inter,"Noto Sans",sans-serif;fill:#222}
.credit{font:11px "Liberation Sans",sans-serif;fill:#555}
.unknown{font:bold 12px "Open Sans","Noto Sans",sans-serif;fill:#fff}
.legend{width:154px;height:71px;border:1px solid #d4d4d4;background:#fff;color:#4a4a4a}
.lt{height:30px;background:#fafafa;padding:7px 6px;letter-spacing:-.1px}
.lb{padding:3px 4px}
.ramp{height:16px;border:1px solid #aaa;background:linear-gradient(90deg,#9e3d22,#ed6f2c 27%,#fdb55e 43%,#fdc57b 48%,#d8d4c9 53%,#a2cee4 58%,#6096c6 80%,#3a6a9c);position:relative}
.ramp i{position:absolute;left:75px;top:12px;width:1px;height:5px;background:#000}
.lv{display:flex;justify-content:space-between;line-height:19px}
.tabs{height:31px;flex:none;background:#e6e6e6;border-top:1px solid #c8c8c8;border-bottom:1px solid #c8c8c8;display:grid;grid-template-columns:131px 56px repeat(5,57px) 56px 57px 57px 63px 60px 62px 62px 63px 62px 63px 102px 71px 32px 32px 32px 1fr;color:#666;letter-spacing:-.1px}
.tabs span{border-right:1px solid #c8c8c8;padding-left:5px;display:flex;align-items:center;white-space:nowrap}
.tabs span:last-child{border:0}
.tabs .new{padding-left:8px}
.tabs .ds{gap:5px;padding-left:9px}
.tabs .db{gap:5px;padding-left:7px}.tabs .st{gap:4px;padding-left:7px}
.tabs .on{background:#fafafa;color:#4a4a4a;font-weight:600;padding-bottom:2px}
.status{height:20px;flex:none;background:#ebebeb;display:flex;align-items:center;padding-left:3px;font-size:11px;gap:17px;letter-spacing:-.16px}
.status svg{margin-left:auto}
.taskbar{height:40px;flex:none;background:linear-gradient(90deg,#213640,#20343f 50%,#1b2a40);display:flex;align-items:center;color:#fff;font-family:"Open Sans","Noto Sans",sans-serif}
.tsearch{width:288px;height:40px;background:#f2f2f2;border:1px solid #c8c8c8;border-width:1px 0 1px 1px;display:flex;align-items:center;padding-left:11px;color:#333;font-size:15px;letter-spacing:-.5px}
.tsearch span{margin-left:10px;white-space:nowrap}
.art{margin-left:auto}
.badge-m{font:bold 10px "Open Sans",sans-serif;fill:#fff}
.wx{margin-left:114px}
.temp{width:38px;margin-left:7px;font-size:14px;letter-spacing:-.6px}
.sunny{width:90px;font-size:14px;letter-spacing:-.35px;white-space:nowrap}
.tray{margin-left:13px}
.eng{width:30px;margin-left:7px;font-size:12px;letter-spacing:-.3px}
.clock{width:70px;text-align:center;font-size:12px;line-height:18px;letter-spacing:-.4px}
.clock b{display:block;font-weight:400}
.note{margin-left:auto}
.cnt{font:12px "Open Sans",sans-serif;fill:#fff}
.watermark{position:absolute;left:1073px;top:649px;color:#999;opacity:.75;font-family:"Open Sans","Noto Sans",sans-serif;white-space:nowrap}
.watermark div{font-size:19px;line-height:26px;letter-spacing:.1px}
.watermark p{font-size:14px;line-height:20px;letter-spacing:.28px}
```
